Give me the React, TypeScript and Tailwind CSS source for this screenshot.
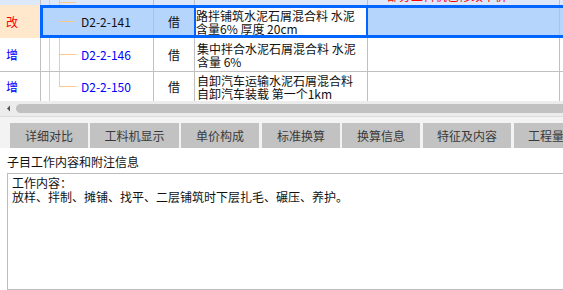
import React from 'react';

const GRID = 'border-[#c0c0c0]';
const TREE = 'bg-[#fcc98a]';

function Tree({ lead, last, code, color }: { lead: string; last?: boolean; code: string; color: string }) {
  return (
    <div className="flex h-full items-stretch">
      <div className={lead} />
      <div className={`w-px ${TREE}`} />
      <div className="w-[9px]" />
      <div className="w-px flex flex-col">
        <div className={`flex-1 ${TREE}`} />
        <div className={`flex-1 ${last ? '' : TREE}`} />
      </div>
      <div className="w-[16px] flex items-center">
        <div className={`h-px w-full ${TREE}`} />
      </div>
      <div className={`ml-[5px] flex items-center ${color}`}>{code}</div>
    </div>
  );
}

function Name({ children }: { children: React.ReactNode }) {
  return <div className="flex items-center leading-[13px] whitespace-pre">{children}</div>;
}

function PlainRow({ mark, code, name, last }: { mark: string; code: string; name: React.ReactNode; last?: boolean }) {
  return (
    <div className={`flex ${last ? 'h-[29px]' : `h-[34px] border-b ${GRID}`}`}>
      <div className={`w-[41px] border-r ${GRID} flex items-center pl-[6px] text-[#0000ff]`}>{mark}</div>
      <div className={`w-[113px] border-r ${GRID}`}>
        <Tree lead="w-[8px]" last={last} code={code} color="text-[#0000ff]" />
      </div>
      <div className={`w-[41px] border-r ${GRID} flex items-center justify-center`}>借</div>
      <div className={`w-[173px] border-r ${GRID} flex pl-[2px]`}>
        <Name>{name}</Name>
      </div>
      <div className={`w-[192px] border-r ${GRID}`} />
      <div className="flex-1" />
    </div>
  );
}

const tabs = [
  { label: '详细对比', cls: 'w-[78px]' },
  { label: '工料机显示', cls: 'w-[89px]' },
  { label: '单价构成', cls: 'w-[78px] mr-px' },
  { label: '标准换算', cls: 'w-[78px]' },
  { label: '换算信息', cls: 'w-[78px] mr-px' },
  { label: '特征及内容', cls: 'w-[88px] mr-px' },
  { label: '工程量明细', cls: 'w-[88px]' },
];

export default function App() {
  return (
    <div className="w-[563px] h-[290px] overflow-hidden bg-white text-[12px] text-[#111] font-['Noto_Sans_CJK_SC','Liberation_Sans',sans-serif]">
      {/* header remnant */}
      <div className="flex h-[5px] overflow-hidden bg-[#dde8fb]">
        <div className={`w-[41px] border-r ${GRID}`} />
        <div className={`w-[113px] border-r ${GRID}`}>
          <Tree lead="w-[8px]" code="" color="" />
        </div>
        <div className={`w-[41px] border-r ${GRID}`} />
        <div className={`w-[173px] border-r ${GRID}`} />
        <div className={`w-[192px] border-r ${GRID} pl-[19px]`}>
          <div className="mt-[-10px] leading-[12px] text-[#ff0000] whitespace-nowrap">部分工料机已修改单价</div>
        </div>
        <div className="flex-1" />
      </div>

      {/* selected row */}
      <div className="flex h-[33px]">
        <div className="w-[40px] bg-[#ffe8cc] flex items-center pl-[6px] text-[#ff0000]">改</div>
        <div className="flex flex-1 border-y-[3px] border-l-[3px] border-[#0066ff] bg-[#b5d5fd]">
          <div className={`w-[111px] border-r ${GRID}`}>
            <Tree lead="w-[6px]" code="D2-2-141" color="text-[#111]" />
          </div>
          <div className="w-[40px] flex items-center justify-center">借</div>
          <div className="w-[174px] border-x-2 border-[#0066ff] bg-white flex">
            <Name>{'路拌铺筑水泥石屑混合料 水泥\n含量6% 厚度 20cm'}</Name>
          </div>
          <div className={`w-[192px] border-r ${GRID}`} />
          <div className="flex-1" />
        </div>
      </div>

      <PlainRow mark="增" code="D2-2-146" name={'集中拌合水泥石屑混合料 水泥\n含量 6%'} />
      <PlainRow mark="增" code="D2-2-150" name={'自卸汽车运输水泥石屑混合料\n自卸汽车装载 第一个1km'} last />

      {/* horizontal scrollbar */}
      <div className="h-[15px] bg-[#ececec] flex items-center">
        <svg width="16" height="15" viewBox="0 0 16 15" className="shrink-0">
          <polygon points="10,4.5 10,10.5 7,7.5" fill="#555" />
        </svg>
        <div className="h-[9px] flex-1 rounded-full bg-[#c1c1c1] mr-[-10px]" />
      </div>
      <div className="h-[7px] bg-[#f3f3f3] border-t border-[#dcdcdc]" />

      {/* tabs */}
      <div className="flex h-[25px] bg-[#f3f3f3] pl-[10px] gap-[2px] whitespace-nowrap">
        {tabs.map((t) => (
          <div key={t.label} className={`${t.cls} shrink-0 bg-[#c2c2c2] text-[#3a3a3a] text-[12px] flex items-center justify-center`}>
            {t.label}
          </div>
        ))}
      </div>

      {/* detail panel */}
      <div className="flex h-[142px]">
        <div className="w-[5px] bg-[#f3f3f3]" />
        <div className="flex-1 bg-white flex flex-col">
          <div className="pl-[7px] pt-[6px] leading-[16px] text-[#111]">子目工作内容和附注信息</div>
          <div className="mt-[3px] ml-[7px] w-[600px] h-[130px] border border-[#bcbcbc] pl-[4px] pt-[2px] leading-[14px] text-[#111]">
            <div>工作内容：</div>
            <div>放样、拌制、摊铺、找平、二层铺筑时下层扎毛、碾压、养护。</div>
          </div>
        </div>
      </div>
    </div>
  );
}
